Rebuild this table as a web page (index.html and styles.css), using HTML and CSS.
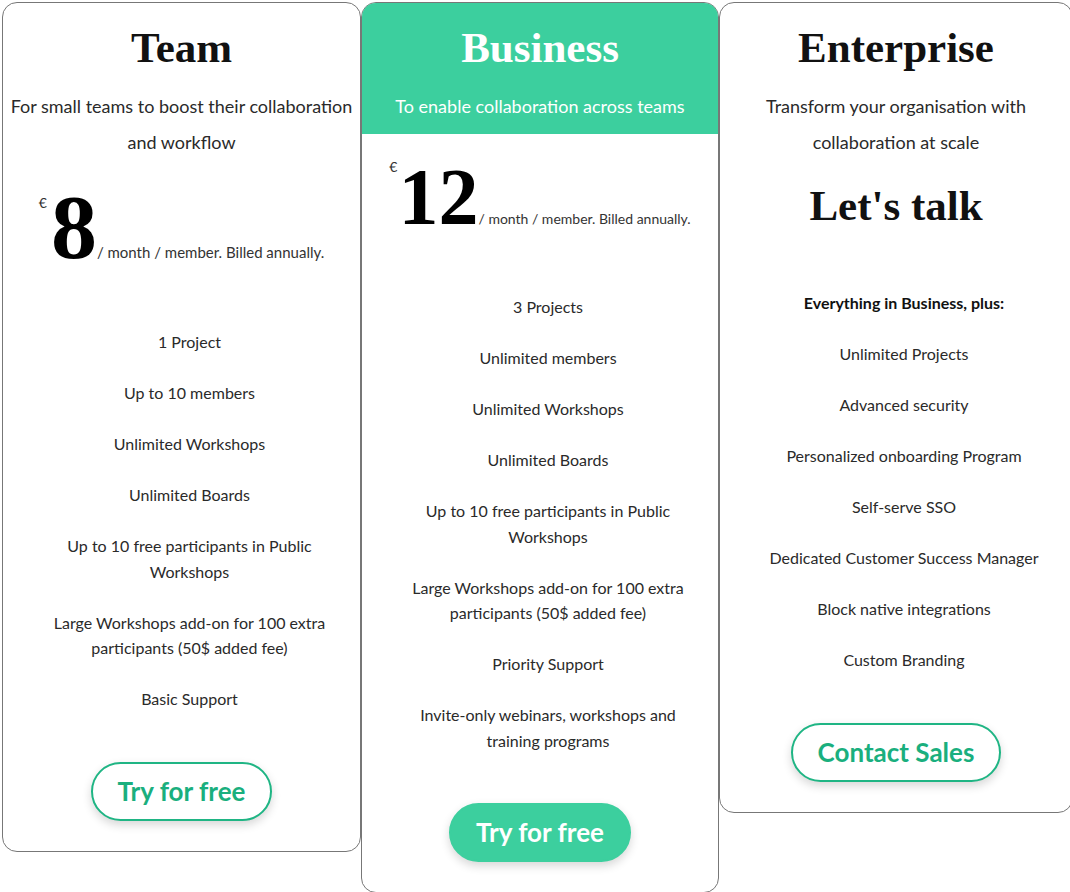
FILE: index.html
```html
<!DOCTYPE html>
<html lang="en">
<head>
<meta charset="utf-8">
<title>Pricing</title>
<link rel="stylesheet" href="styles.css">
</head>
<body>
<div class="plans">
  <section class="plan plan-team">
    <header class="plan-head">
      <h2 class="plan-title">Team</h2>
      <p class="plan-sub">For small teams to boost their collaboration and workflow</p>
    </header>
    <div class="price price-team"><span class="cur">€</span><span class="amount">8</span><span class="per">/ month / member. Billed annually.</span></div>
    <ul class="features">
      <li>1 Project</li>
      <li>Up to 10 members</li>
      <li>Unlimited Workshops</li>
      <li>Unlimited Boards</li>
      <li>Up to 10 free participants in Public Workshops</li>
      <li>Large Workshops add-on for 100 extra participants (50$ added fee)</li>
      <li>Basic Support</li>
    </ul>
    <div class="cta"><a class="btn btn-outline" href="#">Try for free</a></div>
  </section>

  <section class="plan plan-business">
    <header class="plan-head plan-head-accent">
      <h2 class="plan-title">Business</h2>
      <p class="plan-sub">To enable collaboration across teams</p>
    </header>
    <div class="price price-business"><span class="cur">€</span><span class="amount">12</span><span class="per">/ month / member. Billed annually.</span></div>
    <ul class="features">
      <li>3 Projects</li>
      <li>Unlimited members</li>
      <li>Unlimited Workshops</li>
      <li>Unlimited Boards</li>
      <li>Up to 10 free participants in Public Workshops</li>
      <li>Large Workshops add-on for 100 extra participants (50$ added fee)</li>
      <li>Priority Support</li>
      <li>Invite-only webinars, workshops and training programs</li>
    </ul>
    <div class="cta"><a class="btn btn-filled" href="#">Try for free</a></div>
  </section>

  <section class="plan plan-enterprise">
    <header class="plan-head">
      <h2 class="plan-title">Enterprise</h2>
      <p class="plan-sub">Transform your organisation with collaboration at scale</p>
    </header>
    <div class="talk">Let's talk</div>
    <ul class="features">
      <li class="features-lead">Everything in Business, plus:</li>
      <li>Unlimited Projects</li>
      <li>Advanced security</li>
      <li>Personalized onboarding Program</li>
      <li>Self-serve SSO</li>
      <li>Dedicated Customer Success Manager</li>
      <li>Block native integrations</li>
      <li>Custom Branding</li>
    </ul>
    <div class="cta"><a class="btn btn-outline" href="#">Contact Sales</a></div>
  </section>
</div>
</body>
</html>
```

FILE: styles.css
```css
* { box-sizing: border-box; }

html, body {
  margin: 0;
  background: #ffffff;
}

body {
  padding: 2px 0 0 2px;
  font-family: "Lato", "Open Sans", sans-serif;
  color: #2a2a2a;
  overflow: hidden;
}

.plans {
  display: flex;
  align-items: flex-start;
}

.plan {
  flex-shrink: 0;
  border: 1px solid #777777;
  border-radius: 15px;
  background: #ffffff;
  padding-bottom: 30px;
  overflow: hidden;
}

.plan-team { width: 359px; }
.plan-business { width: 358px; }
.plan-enterprise { width: 354px; }

.plan-head {
  text-align: center;
  padding: 20px 0 10px;
}

.plan-head-accent {
  background: #3ccf9e;
  color: #ffffff;
}

.plan-title {
  margin: 0;
  font-family: "Liberation Serif", "Times New Roman", serif;
  font-weight: 700;
  font-size: 43px;
  line-height: 50px;
  color: #111111;
}

.plan-head-accent .plan-title { color: #ffffff; }

.plan-sub {
  margin: 15px 0 0;
  font-size: 18px;
  line-height: 36px;
}

.price {
  text-align: center;
  font-family: "Liberation Serif", "Times New Roman", serif;
  font-weight: 700;
  color: #000000;
  white-space: nowrap;
}

.price .cur {
  display: inline-block;
  vertical-align: top;
  font-family: "Lato", sans-serif;
  font-weight: 400;
  font-size: 14px;
  line-height: 14px;
  color: #333333;
}

.price .per {
  font-family: "Lato", sans-serif;
  font-weight: 400;
  font-size: 15px;
  line-height: 15px;
  color: #333333;
}

.price-team {
  margin-top: 12px;
  font-size: 92px;
  line-height: 90px;
}
.price-team .cur { margin-top: 14px; margin-right: 4px; }

.price-business {
  margin-top: 24px;
  font-size: 80px;
  line-height: 79px;
}
.price-business .cur { margin-top: 2px; margin-right: 1px; }
.price-business .per { font-size: 14px; line-height: 14px; }

.talk {
  margin-top: 11px;
  text-align: center;
  font-family: "Liberation Serif", "Times New Roman", serif;
  font-weight: 700;
  font-size: 43px;
  line-height: 50px;
  color: #111111;
}

.features {
  list-style: none;
  margin: 57px 24px 0 40px;
  padding: 0;
  text-align: center;
  font-size: 16px;
  line-height: 25.5px;
}

.features li { margin-bottom: 25.5px; }
.features li:last-child { margin-bottom: 0; }

.features-lead {
  font-weight: 700;
  color: #111111;
}

.plan-enterprise .features { margin-top: 59px; }

.cta {
  margin-top: 50px;
  text-align: center;
}

.btn {
  display: inline-block;
  padding: 0 25px;
  height: 59px;
  line-height: 55px;
  border: 2px solid #1fb584;
  border-radius: 30px;
  font-size: 26px;
  font-weight: 700;
  text-decoration: none;
  box-shadow: 0 4px 10px rgba(0, 0, 0, 0.16);
}

.btn-outline {
  background: #ffffff;
  color: #1aaf7e;
}

.btn-filled {
  background: #3ccf9e;
  border-color: #3ccf9e;
  color: #ffffff;
}
```
